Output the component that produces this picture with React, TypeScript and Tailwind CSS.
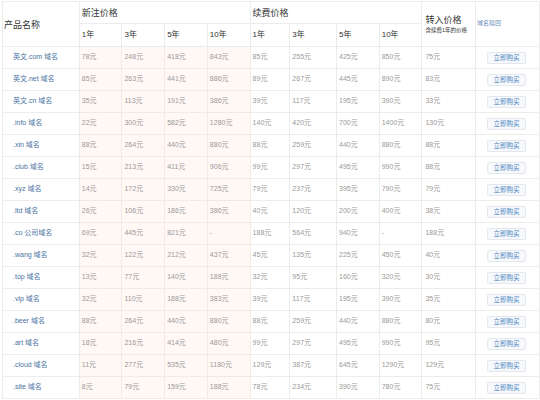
const rows: { name: string; reg: string[]; renew: string[]; transfer: string }[] = [
  { name: "英文.com 域名", reg: ["78元", "248元", "418元", "843元"], renew: ["85元", "255元", "425元", "850元"], transfer: "75元" },
  { name: "英文.net 域名", reg: ["85元", "263元", "441元", "886元"], renew: ["89元", "267元", "445元", "890元"], transfer: "83元" },
  { name: "英文.cn 域名", reg: ["35元", "113元", "191元", "386元"], renew: ["39元", "117元", "195元", "390元"], transfer: "33元" },
  { name: ".info 域名", reg: ["22元", "300元", "582元", "1280元"], renew: ["140元", "420元", "700元", "1400元"], transfer: "130元" },
  { name: ".xin 域名", reg: ["88元", "264元", "440元", "880元"], renew: ["88元", "259元", "440元", "880元"], transfer: "88元" },
  { name: ".club 域名", reg: ["15元", "213元", "411元", "906元"], renew: ["99元", "297元", "495元", "990元"], transfer: "88元" },
  { name: ".xyz 域名", reg: ["14元", "172元", "330元", "725元"], renew: ["79元", "237元", "395元", "790元"], transfer: "79元" },
  { name: ".ltd 域名", reg: ["26元", "106元", "186元", "386元"], renew: ["40元", "120元", "200元", "400元"], transfer: "38元" },
  { name: ".co 公司域名", reg: ["69元", "445元", "821元", "-"], renew: ["188元", "564元", "940元", "-"], transfer: "188元" },
  { name: ".wang 域名", reg: ["32元", "122元", "212元", "437元"], renew: ["45元", "135元", "225元", "450元"], transfer: "40元" },
  { name: ".top 域名", reg: ["13元", "77元", "140元", "188元"], renew: ["32元", "95元", "160元", "320元"], transfer: "30元" },
  { name: ".vip 域名", reg: ["32元", "110元", "188元", "383元"], renew: ["39元", "117元", "195元", "390元"], transfer: "35元" },
  { name: ".beer 域名", reg: ["88元", "264元", "440元", "880元"], renew: ["88元", "259元", "440元", "880元"], transfer: "80元" },
  { name: ".art 域名", reg: ["18元", "216元", "414元", "480元"], renew: ["99元", "297元", "495元", "990元"], transfer: "95元" },
  { name: ".cloud 域名", reg: ["11元", "277元", "535元", "1180元"], renew: ["129元", "387元", "645元", "1290元"], transfer: "129元" },
  { name: ".site 域名", reg: ["8元", "79元", "159元", "188元"], renew: ["78元", "234元", "390元", "780元"], transfer: "75元" },
]

const years = ["1年", "3年", "5年", "10年"]

export default function App() {
  return (
    <div className="w-[540px] h-[400px] overflow-hidden bg-white pt-px pl-[2px] font-['Liberation_Sans','Noto_Sans_CJK_SC',sans-serif]">
      <table className="table-fixed border-collapse text-left">
        <colgroup>
          <col className="w-[77px]" />
          <col className="w-[43px]" />
          <col className="w-[43px]" />
          <col className="w-[43px]" />
          <col className="w-[43px]" />
          <col className="w-[40px]" />
          <col className="w-[47px]" />
          <col className="w-[43px]" />
          <col className="w-[43px]" />
          <col className="w-[54px]" />
          <col className="w-[64px]" />
        </colgroup>
        <thead>
          <tr className="h-[22px]">
            <th rowSpan={2} className="border border-[#ececec] px-px pt-[3px] font-normal text-[9px] text-[#333] align-middle">
              产品名称
            </th>
            <th colSpan={4} className="border border-[#ececec] pl-[2px] pt-[3px] font-normal text-[9px] text-[#333] align-middle">
              新注价格
            </th>
            <th colSpan={4} className="border border-[#ececec] pl-[2px] pt-[3px] font-normal text-[9px] text-[#333] align-middle">
              续费价格
            </th>
            <th rowSpan={2} className="border border-[#ececec] pl-[3px] pt-px font-normal text-[#333] align-middle">
              <div className="text-[9px] leading-[12px]">转入价格</div>
              <div className="text-[5.5px] leading-[9px]">含续费1年的价格</div>
            </th>
            <th rowSpan={2} className="border border-[#ececec] pl-px pt-[6px] font-normal align-top">
              <span className="text-[6px] text-[#6d90bb]">域名赎回</span>
            </th>
          </tr>
          <tr className="h-[23px]">
            {[...years, ...years].map((y, i) => (
              <th key={i} className="border border-[#ececec] pl-[2px] font-normal text-[8px] text-[#333] align-middle">
                {y}
              </th>
            ))}
          </tr>
        </thead>
        <tbody>
          {rows.map((r) => (
            <tr key={r.name} className="h-[22px]">
              <td className="border border-[#ececec] pl-[10px] text-[7px] text-[#4a72a2] whitespace-nowrap">{r.name}</td>
              {r.reg.map((p, i) => (
                <td key={i} className="border border-[#f3eae6] bg-[#fff8f5] pl-[2px] text-[7px] text-[#999]">
                  {p}
                </td>
              ))}
              {r.renew.map((p, i) => (
                <td key={i} className="border border-[#ececec] pl-[2px] text-[7px] text-[#999]">
                  {p}
                </td>
              ))}
              <td className="border border-[#ececec] pl-[3px] text-[7px] text-[#999]">{r.transfer}</td>
              <td className="border border-[#ececec] pl-[11px]">
                <span className="flex items-center justify-center w-[39px] h-[12px] rounded-[2px] border border-[#e3e8ef] bg-[#f7f9fc] text-[6.5px] text-[#4a84c2]">
                  立即购买
                </span>
              </td>
            </tr>
          ))}
        </tbody>
      </table>
    </div>
  )
}
